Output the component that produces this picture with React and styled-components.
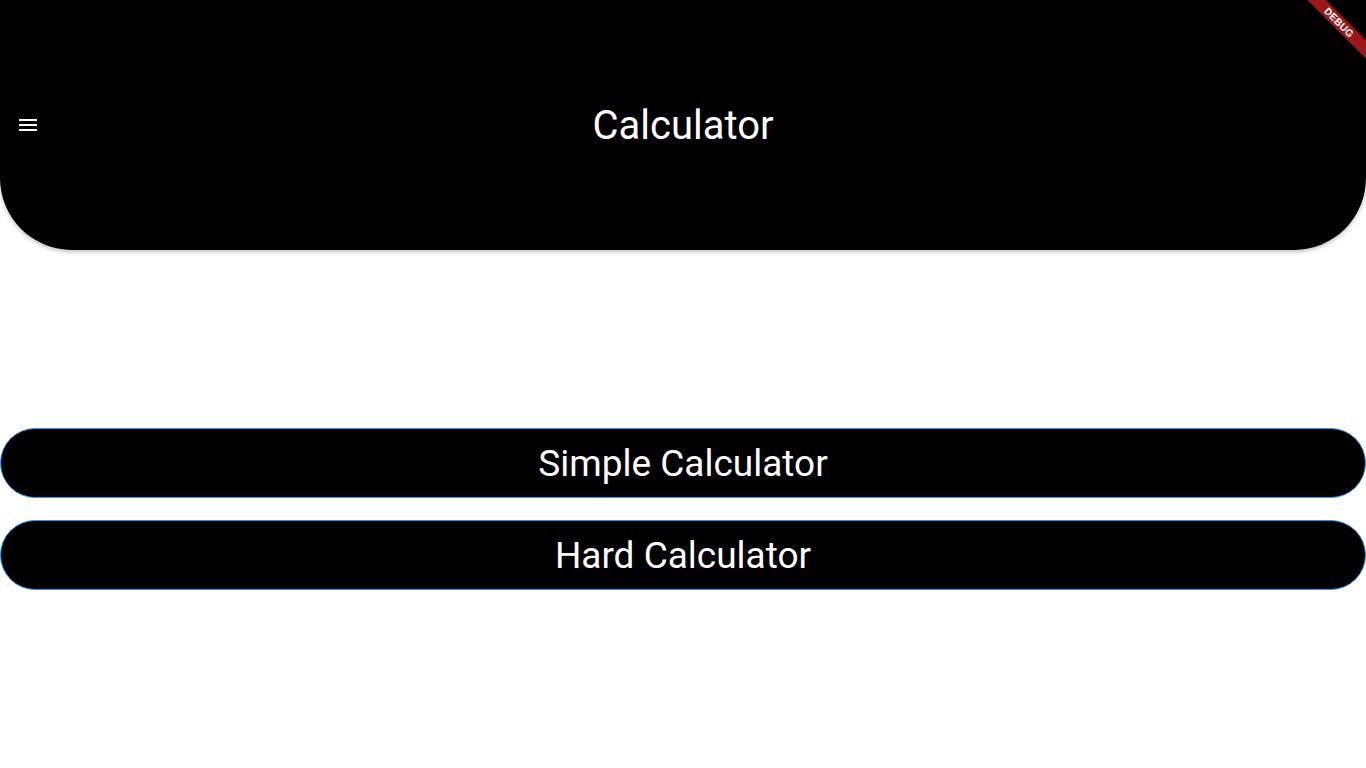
import React from "react";
import styled, { createGlobalStyle } from "styled-components";

const GlobalStyle = createGlobalStyle`
  html, body {
    margin: 0;
    padding: 0;
    background: #fff;
    font-family: Roboto, "Liberation Sans", sans-serif;
  }
  #root {
    height: 100vh;
  }
`;

const Page = styled.div`
  position: relative;
  height: 100vh;
  display: flex;
  flex-direction: column;
  overflow: hidden;
`;

const AppBar = styled.header`
  height: 250px;
  flex-shrink: 0;
  background: #000;
  border-radius: 0 0 72px 72px;
  box-shadow: 0 2px 4px rgba(0, 0, 0, 0.25);
  display: flex;
  align-items: center;
  position: relative;
`;

const MenuButton = styled.button`
  background: none;
  border: none;
  padding: 0;
  margin-left: 16px;
  width: 24px;
  height: 24px;
  color: #fff;
  display: flex;
  align-items: center;
  justify-content: center;
  cursor: pointer;
`;

const Title = styled.h1`
  position: absolute;
  left: 0;
  right: 0;
  margin: 0;
  text-align: center;
  color: #fff;
  font-weight: 400;
  font-size: 40px;
  pointer-events: none;
`;

const Body = styled.main`
  flex: 1;
  display: flex;
  flex-direction: column;
  justify-content: center;
  gap: 22px;
`;

const NavButton = styled.button`
  height: 70px;
  width: 100%;
  box-sizing: border-box;
  background: #000;
  color: #fff;
  border: 1px solid #2196f3;
  border-radius: 35px;
  font-family: Roboto, "Liberation Sans", sans-serif;
  font-size: 37px;
  font-weight: 400;
  cursor: pointer;
`;

const Banner = styled.div`
  position: absolute;
  top: 16px;
  right: -28px;
  width: 110px;
  height: 13px;
  background: rgba(183, 28, 28, 0.85);
  transform: rotate(45deg);
  transform-origin: center;
  color: #fff;
  font-family: "Liberation Sans", sans-serif;
  font-weight: 700;
  font-size: 10px;
  line-height: 13px;
  text-align: center;
  letter-spacing: 0.2px;
`;

const MenuIcon = () => (
  <svg width="24" height="24" viewBox="0 0 24 24" fill="currentColor">
    <path d="M3 18h18v-2H3v2zm0-5h18v-2H3v2zm0-7v2h18V6H3z" />
  </svg>
);

export default function App() {
  return (
    <Page>
      <GlobalStyle />
      <AppBar>
        <MenuButton aria-label="menu">
          <MenuIcon />
        </MenuButton>
        <Title>Calculator</Title>
      </AppBar>
      <Body>
        <NavButton>Simple Calculator</NavButton>
        <NavButton>Hard Calculator</NavButton>
      </Body>
      <Banner>DEBUG</Banner>
    </Page>
  );
}
